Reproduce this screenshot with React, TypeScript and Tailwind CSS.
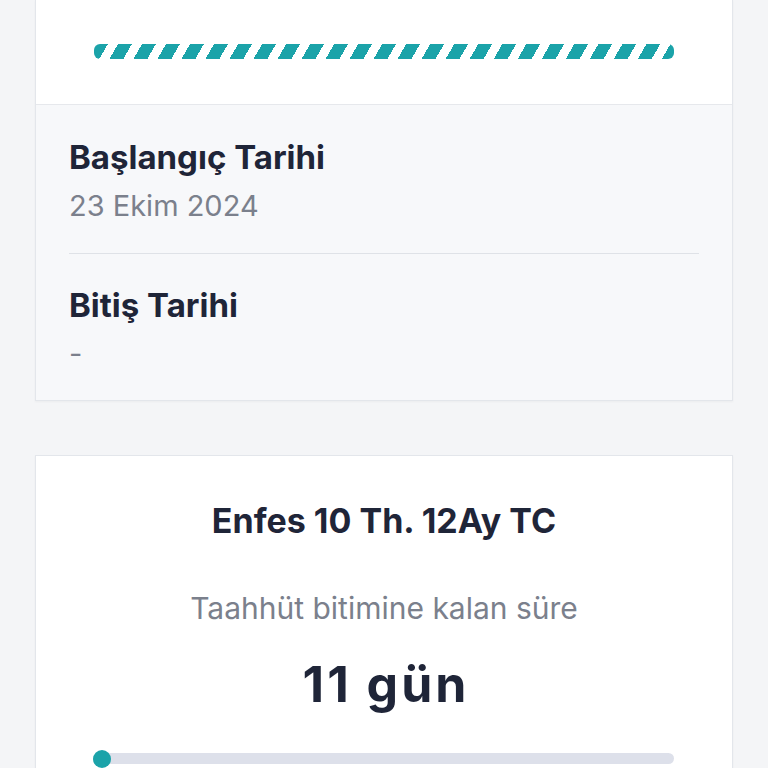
export default function App() {
  return (
    <div className="min-h-screen bg-[#f4f5f7] px-[35px] font-['Inter',sans-serif] text-[#1f2538]">
      {/* Paket kartı */}
      <div className="border border-t-0 border-[#e3e6eb] bg-white shadow-[0_1px_2px_rgba(0,0,0,0.04)]">
        <div className="flex h-[104px] items-center justify-center px-[58px] pb-[1px]">
          <div className="h-[15px] w-full rounded-[6px] bg-[repeating-linear-gradient(120deg,#1ba3a9_0px,#1ba3a9_12px,#ffffff_12px,#ffffff_20.8px)]" />
        </div>
        <div className="border-t border-[#e6e8ec] bg-[#f7f8fa] px-[33px] pb-[28px] pt-[34px]">
          <div className="text-[33px] font-bold leading-[36px]">Başlangıç Tarihi</div>
          <div className="mt-[13px] text-[29px] leading-[36px] text-[#7b808c]">23 Ekim 2024</div>
          <div className="mt-[29px] h-px bg-[#dfe2e7]" />
          <div className="mt-[33px] text-[33px] font-bold leading-[36px]">Bitiş Tarihi</div>
          <div className="mt-[13px] text-[29px] leading-[36px] text-[#7b808c]">-</div>
        </div>
      </div>

      {/* Taahhüt kartı */}
      <div className="mt-[54px] border border-[#e3e6eb] bg-white px-[58px] pb-[40px] pt-[45px] text-center shadow-[0_1px_2px_rgba(0,0,0,0.04)]">
        <div className="text-[34px] font-bold leading-[40px]">Enfes 10 Th. 12Ay TC</div>
        <div className="mt-[49px] text-[30px] leading-[36px] text-[#7b808c]">Taahhüt bitimine kalan süre</div>
        <div className="mt-[28px] pl-[4px] text-[50px] font-bold leading-[60px] tracking-[3px]">11 gün</div>
        <div className="relative mt-[39px] h-[11px] rounded-full bg-[#dde0ea]">
          <div className="absolute left-[-1px] top-1/2 h-[18px] w-[18px] -translate-y-1/2 rounded-full bg-[#1ba3a9]" />
        </div>
      </div>
    </div>
  )
}
